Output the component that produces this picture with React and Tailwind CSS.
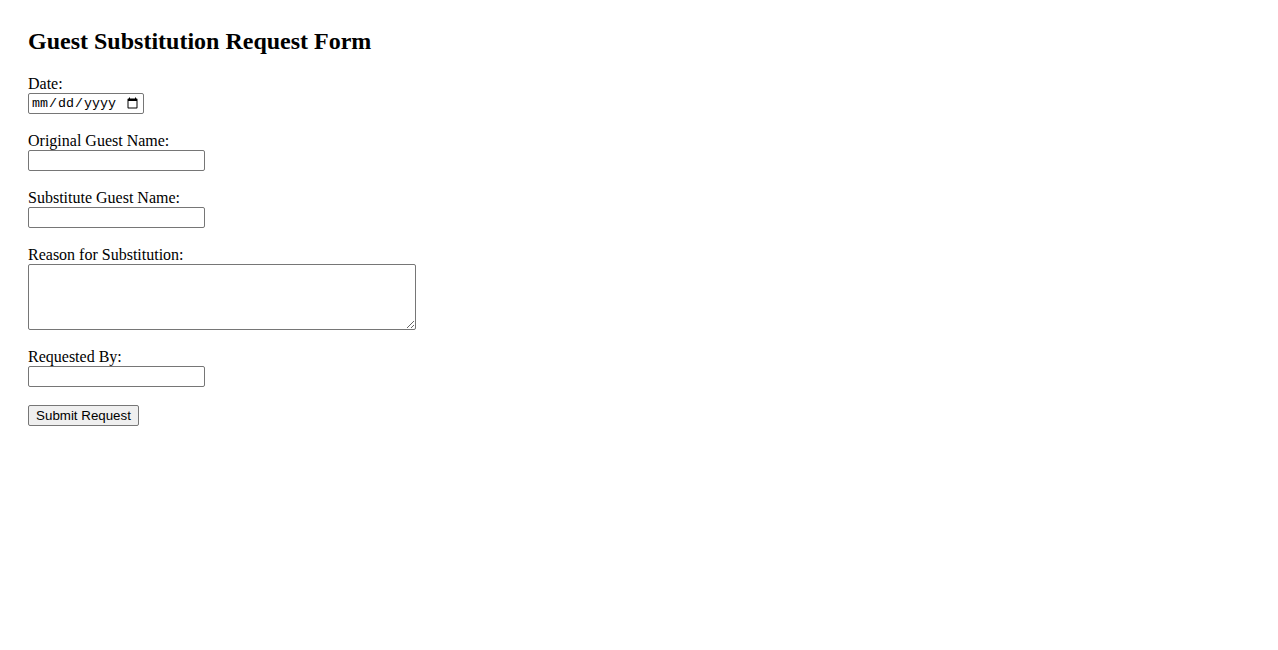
const fieldInput =
  "h-[21px] w-[177px] border border-[#767676] rounded-[2px] bg-white px-[2px] py-[1px] text-[13.33px] font-['Liberation_Sans',Arial,sans-serif]";

const Field = ({ label, children }) => (
  <div className="flex flex-col items-start">
    <label className="leading-[18px]">{label}</label>
    {children}
  </div>
);

const App = () => {
  return (
    <div className="min-h-screen bg-white px-7 pt-[27px] font-['Liberation_Serif',serif] text-base text-black">
      <h2 className="mb-5 text-2xl font-bold leading-7">Guest Substitution Request Form</h2>
      <form className="flex flex-col items-start gap-[18px]" onSubmit={(e) => e.preventDefault()}>
        <Field label="Date:">
          <input
            type="date"
            className="h-[21px] w-[116px] border border-[#767676] rounded-[2px] bg-white px-[2px] py-0 text-[13.33px] font-['Liberation_Mono',monospace]"
          />
        </Field>
        <Field label="Original Guest Name:">
          <input type="text" className={fieldInput} />
        </Field>
        <Field label="Substitute Guest Name:">
          <input type="text" className={fieldInput} />
        </Field>
        <Field label="Reason for Substitution:">
          <textarea className="h-[66px] w-[388px] resize border border-[#767676] rounded-[2px] bg-white p-[2px] text-[13.33px] font-['Liberation_Mono',monospace]" />
        </Field>
        <Field label="Requested By:">
          <input type="text" className={fieldInput} />
        </Field>
        <button
          type="submit"
          className="h-[21px] w-[111px] border border-[#767676] rounded-[2px] bg-[#efefef] px-[6px] text-[13.33px] leading-none font-['Liberation_Sans',Arial,sans-serif] hover:bg-[#e5e5e5]"
        >
          Submit Request
        </button>
      </form>
    </div>
  );
};

export default App;
